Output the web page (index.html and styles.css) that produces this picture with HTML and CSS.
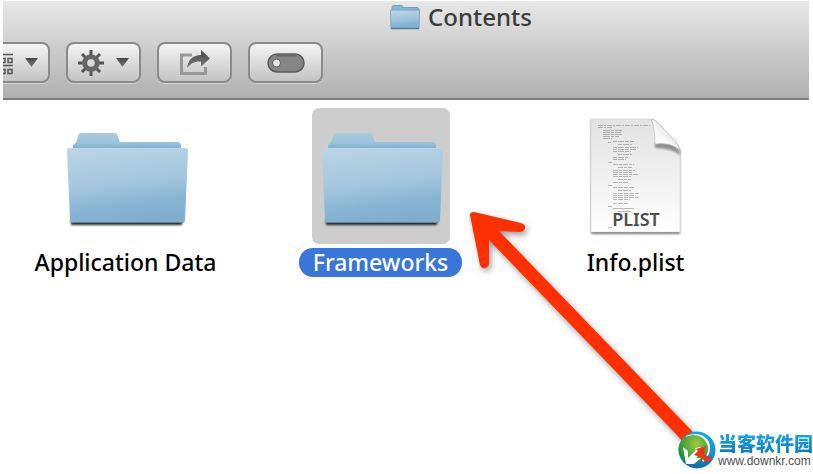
FILE: index.html
```
<!doctype html>
<html lang="en">
<head>
<meta charset="utf-8">
<title>Contents</title>
<link rel="stylesheet" href="styles.css">
</head>

<body>
<!-- shared shapes -->
<svg class="defs" aria-hidden="true">
	<defs>
		<linearGradient id="front" x1="0.3" y1="0" x2="0.5" y2="1">
			<stop offset="0" stop-color="#b9d4e6"/>
			<stop offset="0.5" stop-color="#a2c5dd"/>
			<stop offset="0.8" stop-color="#85b3d2"/>
			<stop offset="1" stop-color="#80afce"/>
		</linearGradient>
		<linearGradient id="back" x1="0" y1="0" x2="0" y2="1">
			<stop offset="0" stop-color="#a9cade"/>
			<stop offset="0.5" stop-color="#9cc3dc"/>
			<stop offset="1" stop-color="#6fa3c4"/>
		</linearGradient>
		<linearGradient id="paper" x1="0" y1="0" x2="0" y2="1">
			<stop offset="0" stop-color="#e2e2e2"/>
			<stop offset="0.5" stop-color="#f0f0f0"/>
			<stop offset="1" stop-color="#fff"/>
		</linearGradient>
		<linearGradient id="curl" x1="0" y1="1" x2="0.7" y2="0.3">
			<stop offset="0" stop-color="#fff"/>
			<stop offset="0.6" stop-color="#f8f8f8"/>
			<stop offset="1" stop-color="#ddd"/>
		</linearGradient>
		<linearGradient id="dark" x1="0" y1="0" x2="0" y2="1">
			<stop offset="0" stop-color="#454545"/>
			<stop offset="1" stop-color="#7c7c7c"/>
		</linearGradient>
		<linearGradient id="ring" x1="0" y1="0" x2="0" y2="1">
			<stop offset="0" stop-color="#18a4e4"/>
			<stop offset="0.6" stop-color="#1590d8"/>
			<stop offset="1" stop-color="#0d6cb4"/>
		</linearGradient>
		<radialGradient id="leaf" cx="0.6" cy="0.3" r="0.7">
			<stop offset="0" stop-color="#9ccb3c"/>
			<stop offset="0.6" stop-color="#4ca53a"/>
			<stop offset="1" stop-color="#128a3e"/>
		</radialGradient>
		<filter id="soft" x="-20%" y="-20%" width="140%" height="140%"><feGaussianBlur stdDeviation="1.2"/></filter>
		<symbol id="folder" viewBox="0 0 138 136">
			<rect x="14" y="111" width="111" height="6" fill="#222" filter="url(#soft)"/>
			<path d="M16 44V37q4-3 5-8q0-4 4-4h32q4 0 4 4l2 5h57q4 0 4 4v6z" fill="url(#back)"/>
			<path d="M12 40h116q3 0 3 3l-3 69q0 3-3 3H16q-3 0-3-3L10 43q0-3 2-3z" fill="url(#front)"/>
			<path d="M12 40.5h117" stroke="#bcd8e8" stroke-width="1"/>
			<path d="M14 114.5h112" stroke="#5888a6" stroke-width="1"/>
		</symbol>
	</defs>
</svg>

<div class="window">
	<header class="bar">
		<h1 class="title">
			<svg class="title-icon" viewBox="0 0 30 25" aria-hidden="true">
				<path d="M2 7V2.500q0-2 2-2h7q2 0 2 2h14q2 0 2 2V7z" fill="#88b5d1" stroke="#6f9fbe"/>
				<path d="M.5 5h29l-.5 18.500H1z" fill="url(#front)" stroke="#7ba9c6"/>
				<path d="M1 23.500h28" stroke="#4d7d9b" stroke-width="1.500"/>
			</svg>
			Contents
		</h1>
		<div class="toolbar">
			<button class="btn btn-cut" type="button" aria-label="Arrange">
				<svg width="26" height="26" viewBox="0 0 26 26" aria-hidden="true" fill="none" stroke="#555" stroke-width="1.500">
					<path d="M0 4.500h26M0 15.500h26"/>
					<path d="M1 8.500h4v4H1zM8 8.500h4v4H8zM14 8.500h4v4h-4zM21 8.500h4v4h-4zM1 19.500h4v4H1zM8 19.500h4v4H8zM14 19.500h4v4h-4zM21 19.500h4v4h-4z"/>
				</svg>
				<svg class="caret" width="13" height="9" viewBox="0 0 13 9" aria-hidden="true"><path d="M0 0h13L6.500 9z" fill="url(#dark)"/></svg>
			</button>
			<button class="btn" type="button" aria-label="Action">
				<svg width="26" height="26" viewBox="0 0 26 26" aria-hidden="true">
					<g stroke="#555" stroke-width="3">
						<path d="M13 0v6M13 20v6M0 13h6M20 13h6"/>
						<path d="M4 4l4.500 4.500M17.500 17.500l4.500 4.500M4 22l4.500-4.500M17.500 8.500l4.500-4.500"/>
					</g>
					<circle cx="13" cy="13" r="6.300" fill="none" stroke="#666" stroke-width="5"/>
				</svg>
				<svg class="caret" width="13" height="9" viewBox="0 0 13 9" aria-hidden="true"><path d="M0 0h13L6.500 9z" fill="url(#dark)"/></svg>
			</button>
			<button class="btn" type="button" aria-label="Share">
				<svg width="30" height="26" viewBox="0 0 30 26" aria-hidden="true">
					<path d="M12 5H1.500v18.500h24V17" fill="none" stroke="#989898" stroke-width="3"/>
					<path d="M21 0l9 8.500-9 8v-5C15 11 11 13 7 18C8 10 13 5 21 5z" fill="url(#dark)"/>
				</svg>
			</button>
			<button class="btn" type="button" aria-label="Tags">
				<svg width="38" height="20" viewBox="0 0 38 20" aria-hidden="true">
					<rect x="1" y="1" width="36" height="18" rx="9" fill="#858585" stroke="#5c5c5c" stroke-width="1.500"/>
					<path d="M9 2.500h20" stroke="#686868" stroke-width="2"/>
					<circle cx="9.500" cy="10" r="4" fill="#e4e4e4" stroke="#5c5c5c"/>
				</svg>
			</button>
		</div>
	</header>

	<main class="files">
		<a class="file" href="#application-data">
			<svg class="thumb" aria-hidden="true"><use href="#folder"/></svg>
			<span class="name">Application Data</span>
		</a>
		<a class="file selected" href="#frameworks">
			<svg class="thumb" aria-hidden="true"><use href="#folder"/></svg>
			<span class="name">Frameworks</span>
		</a>
		<a class="file" href="#info-plist">
			<svg class="thumb" viewBox="0 0 138 136" aria-hidden="true">
				<path d="M24 12h60l29 30v84H24z" fill="#777" filter="url(#soft)"/>
				<path d="M26 11h57q5 0 8 4l18 19q4 4 4 9v81H24V13q0-2 2-2z" fill="url(#paper)" stroke="#d0d0d0" stroke-width=".5"/>
				<path d="M88 34h17l8 9v4q-9-7-25-7z" fill="#555" opacity=".6" filter="url(#soft)"/>
				<path d="M84 11q4 8 4 25q15-2 25 6q-1-4-4-8L91 15q-3-4-7-4z" fill="url(#curl)" stroke="#bbb" stroke-width=".7"/>
				<g stroke="#777" stroke-width="1" opacity=".5" fill="none">
					<path d="M31 17.500h52M31 19.500h14" stroke-dasharray="5 1 2 1"/>
					<path d="M36 22.500h20M36 24.500h18M36 26.500h20M36 28.500h16M36 30.500h9" stroke-dasharray="7 1 3 1"/>
					<path d="M46 33.500h21M51 36.500h14M46 39.500h25M46 41.500h24M46 43.500h18M51 46.500h14M46 49.500h15M46 51.500h13" stroke-dasharray="4 1 6 1"/>
					<path d="M46 56.500h21M51 59.500h14M46 62.500h22M46 64.500h20M46 66.500h26M46 68.500h18M51 71.500h13M46 74.500h15" stroke-dasharray="5 1 3 1"/>
					<path d="M46 79.500h21M51 82.500h13M46 85.500h26M46 87.500h23M46 89.500h26M46 91.500h17M46 95.500h16" stroke-dasharray="4 1 5 1"/>
					<path d="M46 100.500h21M51 103.500h13M41 34.500h3M41 54.500h4M41 77.500h4M41 98.500h4M41 119.500h4"/>
				</g>
				<text class="kind" x="69" y="118" text-anchor="middle">PLIST</text>
			</svg>
			<span class="name">Info.plist</span>
		</a>
	</main>
</div>

<!-- pointer drawn over the folder list -->
<svg class="arrow" width="240" height="250" viewBox="0 0 240 250" aria-hidden="true">
	<path d="M4 2L51 13q5 2 4 5q-1 4-6 4L29 21L222 221L232 238H218L206 224L19 30V54q-1 4-5 4q-3 0-4-3L0 5q0-3 4-3z"/>
</svg>

<a class="mark" href="#downkr">
	<svg width="38" height="38" viewBox="0 0 38 38" aria-hidden="true">
		<circle cx="19" cy="19" r="18.500" fill="url(#ring)"/>
		<path d="M8 5Q24-1 31 11q4 11-6 20L18 18z" fill="#e9f6fc"/>
		<path d="M1 14Q5 5 15 4q11 0 15 11q1 9-7 15Q14 37 6 30Q-1 23 1 14z" fill="url(#leaf)"/>
		<path d="M5 16l5 4v7l8-8-1-2 6-1-3 9-2 2h5l-7 6H8z" fill="#fff"/>
		<path d="M16 24l4-4-2-2 10-3-2 8 9 5q-4 3-8 2l-5-4z" fill="#f03418"/>
	</svg>
	<span class="mark-text">
		<span class="mark-name" lang="zh">当客软件园</span>
		<span class="mark-url">www.downkr.com</span>
	</span>
</a>
</body>
</html>
```

FILE: styles.css
```
*{
	box-sizing:border-box;
	margin:0;
	padding:0;
}
body{
	position:relative;
	min-height:100vh;
	padding:1px 4px 0 3px;
	background:#fff;
	font-family:"Noto Sans", "Open Sans", sans-serif;
	overflow:hidden;
}
.defs{
	position:absolute;
	width:0;
	height:0;
}

/* title bar */
.bar{
	padding-bottom:15px;
	background:linear-gradient(#e8e8e8, #b0b0b0);
	border-bottom:2px solid #7b7b7b;
	overflow:hidden;
}
.title{
	display:flex;
	align-items:center;
	justify-content:center;
	gap:8px;
	height:32px;
	margin-bottom:9px;
	padding-left:110px;
	color:#3c3c3c;
	font-size:24px;
	font-weight:500;
	line-height:32px;
}
.title-icon{
	width:30px;
	height:25px;
}
.toolbar{
	display:flex;
	gap:16px;
}
.btn{
	display:flex;
	align-items:center;
	justify-content:center;
	gap:12px;
	width:75px;
	height:41px;
	border:2px solid #8a8a8a;
	border-radius:8px;
	background:linear-gradient(#f4f4f4, #c4c4c4);
	box-shadow:0 1px 0 #d4d4d4;
}
.btn-cut{
	margin-left:-28px;
}

/* icon view */
.files{
	display:grid;
	grid-template-columns:repeat(auto-fill, 245px);
	gap:10px;
	padding-top:8px;
}
.file{
	display:flex;
	flex-direction:column;
	align-items:center;
	gap:4px;
	color:#000;
	text-decoration:none;
}
.thumb{
	width:138px;
	height:136px;
	border-radius:7px;
}
.name{
	padding:0 14px;
	border-radius:14px;
	font-size:23px;
	font-weight:500;
	line-height:29px;
}
.selected .thumb{
	background:#cdcdcd;
}
.selected .name{
	background:#3a75d8;
	color:#fff;
}
.kind{
	fill:#4d4d4d;
	font-size:18px;
	font-weight:600;
}

/* overlays */
.arrow{
	position:absolute;
	left:470px;
	top:210px;
	fill:#ff3000;
	filter:drop-shadow(2px 3px 3px rgba(0,0,0,.4));
}
.mark{
	position:absolute;
	right:0;
	bottom:5px;
	display:flex;
	align-items:center;
	gap:2px;
	text-decoration:none;
}
.mark-text{
	display:flex;
	flex-direction:column;
}
.mark-name{
	background:linear-gradient(#1cabea, #0b78c4);
	-webkit-background-clip:text;
	background-clip:text;
	color:transparent;
	font-family:"Noto Sans CJK SC", sans-serif;
	font-size:19px;
	font-weight:900;
	line-height:22px;
}
.mark-url{
	color:#505050;
	font-family:"Liberation Sans", sans-serif;
	font-size:12px;
	line-height:14px;
}
```
